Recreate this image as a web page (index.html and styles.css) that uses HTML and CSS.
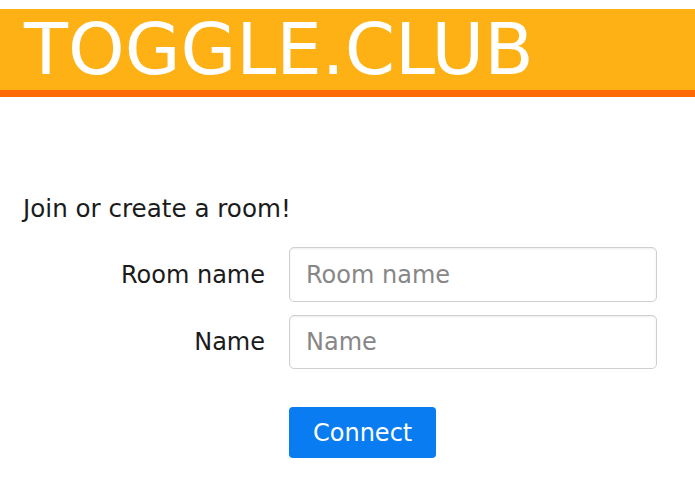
FILE: index.html
```html
<!DOCTYPE html>
<html lang="en">
<head>
    <meta charset="UTF-8">
    <meta name="viewport" content="width=device-width, initial-scale=1.0">
    <title>Toggle.club</title>
    <link rel="stylesheet" href="styles.css">
</head>
<body>
    <header class="banner">
        <h1>TOGGLE.CLUB</h1>
    </header>

    <main class="lobby">
        <p class="intro">Join or create a room!</p>
        <form class="join-form" onsubmit="return false;">
            <label for="room">Room name</label>
            <input id="room" type="text" placeholder="Room name">

            <label for="name">Name</label>
            <input id="name" type="text" placeholder="Name">

            <button type="submit" class="connect">Connect</button>
        </form>
    </main>
</body>
</html>
```

FILE: styles.css
```css
body {
    margin: 0;
    font-family: 'DejaVu Sans', 'Liberation Sans', sans-serif;
    font-size: 24px;
    color: #1b1b1b;
    background: #fff;
}

.banner {
    margin-top: 9px;
    height: 81px;
    background: #feb115;
    border-bottom: 7px solid #ff6a06; /* darker stripe under the title */
    padding-left: 24px;
}

.banner h1 {
    margin: 0;
    font-size: 72px;
    font-weight: normal;
    line-height: 81px;
    color: #fff;
}

.lobby {
    padding: 0 23px;
}

.intro {
    margin: 94px 0 20px;
    font-size: 24.6px;
    line-height: 36px;
}

.join-form {
    display: grid;
    grid-template-columns: 242px 368px;
    column-gap: 24px;
    row-gap: 13px;
    align-items: center;
}

.join-form label {
    text-align: right;
}

.join-form input {
    box-sizing: border-box;
    height: 55px;
    padding: 0 16px;
    font-family: inherit;
    font-size: 24px;
    color: #495057;
    border: 1px solid #cfcfcf;
    border-radius: 5px;
    box-shadow: inset 0 1px 2px rgba(0, 0, 0, 0.08);
    outline: none;
}

.join-form input:nth-of-type(2) {
    height: 54px;
}

.join-form input::placeholder {
    color: #878787;
}

.connect {
    grid-column: 2;
    justify-self: start;
    margin-top: 25px;
    height: 51px;
    padding: 0 24px;
    font-family: inherit;
    font-size: 24px;
    color: #fff;
    background-color: #087cf0;
    border: none;
    border-radius: 4px;
    cursor: pointer;
}

.connect:hover {
    background-color: #0069d9;
}
```
